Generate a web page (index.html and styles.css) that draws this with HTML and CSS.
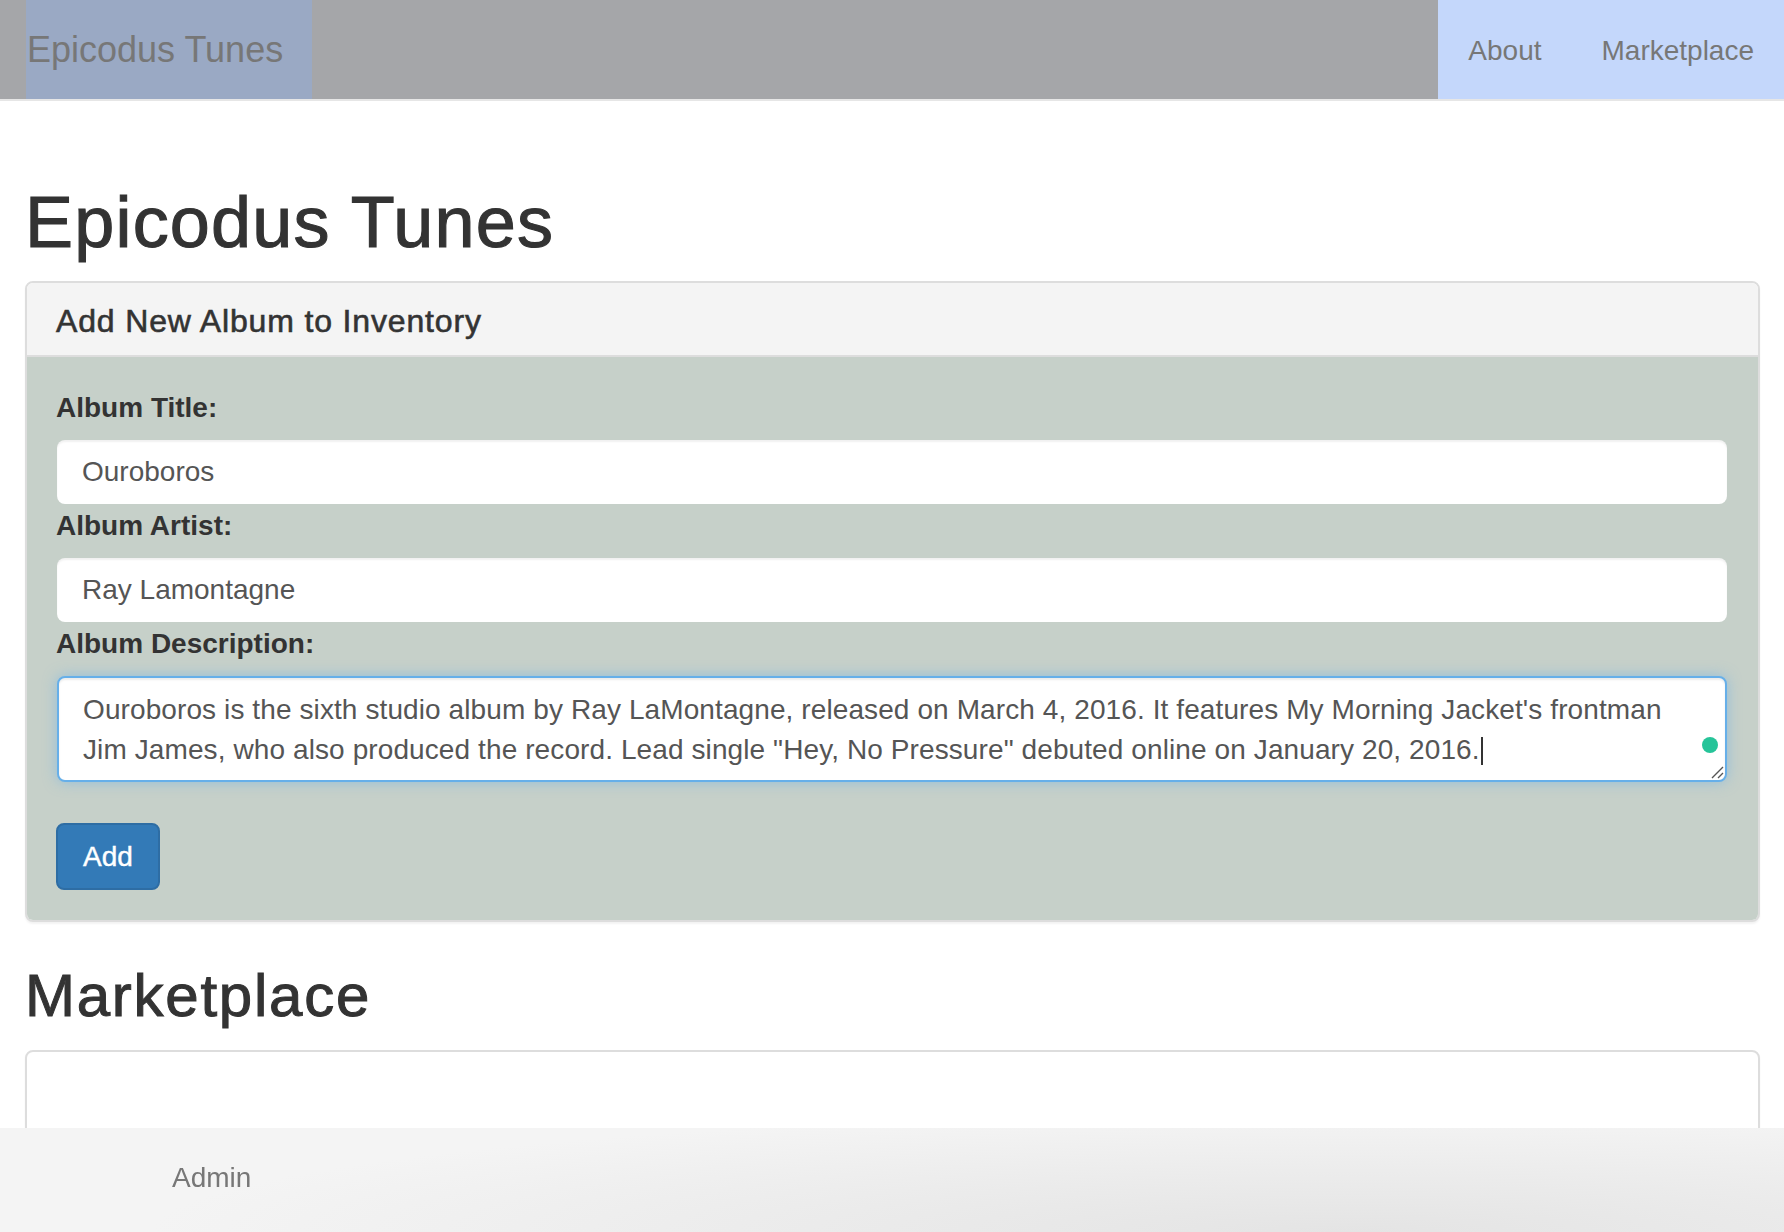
FILE: index.html
```html
<!DOCTYPE html>
<html lang="en">
<head>
<meta charset="utf-8">
<title>Epicodus Tunes</title>
<link rel="stylesheet" href="styles.css">
</head>
<body>
<nav class="navbar">
  <a class="brand" href="#">Epicodus Tunes</a>
  <ul class="nav">
    <li><a href="#">About</a></li>
    <li><a href="#">Marketplace</a></li>
  </ul>
</nav>

<main class="page">
  <h1 class="title">Epicodus Tunes</h1>

  <section class="panel">
    <div class="panel-heading">
      <h3 class="panel-title">Add New Album to Inventory</h3>
    </div>
    <div class="panel-body">
      <label class="field-label">Album Title:</label>
      <div class="field-input">Ouroboros</div>
      <label class="field-label">Album Artist:</label>
      <div class="field-input">Ray Lamontagne</div>
      <label class="field-label">Album Description:</label>
      <div class="field-area">Ouroboros is the sixth studio album by Ray LaMontagne, released on March 4, 2016. It features My Morning Jacket's frontman Jim James, who also produced the record. Lead single "Hey, No Pressure" debuted online on January 20, 2016.<span class="caret"></span><span class="grammar-dot"></span><svg class="grip" width="14" height="14" viewBox="0 0 14 14"><path d="M13 2 L2 13 M13 8 L8 13" stroke="#555" stroke-width="1.4" fill="none"/></svg></div>
      <button class="btn" type="button">Add</button>
    </div>
  </section>

  <h2 class="subtitle">Marketplace</h2>
  <section class="panel panel-empty"></section>
</main>

<footer class="footer">
  <a class="footer-link" href="#">Admin</a>
</footer>
</body>
</html>
```

FILE: styles.css
```css
* {
  box-sizing: border-box;
}

html, body {
  margin: 0;
  padding: 0;
}

body {
  font-family: "Liberation Sans", Helvetica, Arial, sans-serif;
  font-size: 28px;
  line-height: 40px;
  color: #333;
  background: #fff;
}

a {
  text-decoration: none;
}

/* ---------- navbar ---------- */
.navbar {
  display: flex;
  height: 101px;
  background: #a5a6a9;
  border-bottom: 2px solid #e6e6e6;
}

.brand {
  margin-left: 26px;
  width: 286px;
  padding-left: 1px;
  font-size: 36px;
  line-height: 99px;
  color: #777;
  background: #9aa9c4;
}

.nav {
  display: flex;
  justify-content: flex-end;
  margin: 0 0 0 auto;
  padding: 0;
  width: 346px;
  list-style: none;
  background: #c4d7fb;
}

.nav a {
  display: block;
  padding: 2px 30px 0;
  line-height: 97px;
  color: #777;
}

/* ---------- page ---------- */
.page {
  padding: 0 24px 0 25px;
}

.title {
  margin: 82px 0 19px;
  font-size: 72px;
  line-height: 79px;
  font-weight: 400;
  letter-spacing: 1.2px;
  -webkit-text-stroke: 1.1px #333;
  color: #333;
}

.subtitle {
  margin: 41px 0 21px;
  font-size: 60px;
  line-height: 66px;
  font-weight: 400;
  letter-spacing: 1.75px;
  -webkit-text-stroke: 1px #333;
  color: #333;
}

.panel {
  border: 2px solid #ddd;
  border-radius: 8px;
  background: #fff;
  box-shadow: 0 2px 2px rgba(0, 0, 0, 0.05);
}

.panel-heading {
  padding: 20px 30px 16px 29px;
  background: #f4f4f4;
  border-bottom: 2px solid #ddd;
  border-radius: 6px 6px 0 0;
}

.panel-title {
  margin: 0;
  font-size: 32px;
  line-height: 36px;
  font-weight: 400;
  letter-spacing: 0.85px;
  -webkit-text-stroke: 0.6px #333;
  color: #333;
}

.panel-body {
  display: flex;
  flex-direction: column;
  align-items: flex-start;
  padding: 31px 30px 30px 29px;
  background: #c6d0c9;
  border-radius: 0 0 6px 6px;
}

.field-label {
  font-weight: 700;
  line-height: 40px;
  color: #333;
}

.field-input {
  align-self: stretch;
  margin: 11.5px 1px 2.5px;
  height: 64px;
  padding: 0 24px 0 25px;
  border-radius: 8px;
  background: #fff;
  box-shadow: inset 0 2px 2px rgba(0, 0, 0, 0.06);
  line-height: 64px;
  color: #555;
}

.field-area {
  position: relative;
  align-self: stretch;
  margin: 11.5px 1px 0;
  height: 106px;
  padding: 12px 24px;
  border: 2px solid #66afe9;
  border-radius: 8px;
  background: #fff;
  box-shadow: inset 0 2px 2px rgba(0, 0, 0, 0.075), 0 0 14px rgba(102, 175, 233, 0.55);
  line-height: 40px;
  letter-spacing: 0.1px;
  color: #555;
}

.caret {
  display: inline-block;
  width: 2px;
  height: 28px;
  margin-left: 1px;
  vertical-align: -6px;
  background: #333;
}

.grammar-dot {
  position: absolute;
  right: 7px;
  top: 59px;
  width: 16px;
  height: 16px;
  border-radius: 50%;
  background: #26c499;
}

.grip {
  position: absolute;
  right: 1px;
  bottom: 1px;
}

.btn {
  margin-top: 41px;
  height: 67px;
  padding: 12px 25px 11px;
  border: 2px solid #2e6da4;
  border-radius: 8px;
  background: #337ab7;
  color: #fff;
  font-family: inherit;
  font-size: 28px;
  line-height: 40px;
  -webkit-text-stroke: 0.4px #fff;
}

.panel-empty {
  height: 160px;
}

/* ---------- footer ---------- */
.footer {
  position: fixed;
  left: 0;
  right: 0;
  bottom: 0;
  height: 104px;
  padding: 30px 0 0 172px;
  background: radial-gradient(ellipse 1200px 120px at 1350px 100%, #e4e4e4 0%, #ebebeb 45%, #f4f4f4 100%);
}

.footer-link {
  line-height: 40px;
  color: #777;
}
```
